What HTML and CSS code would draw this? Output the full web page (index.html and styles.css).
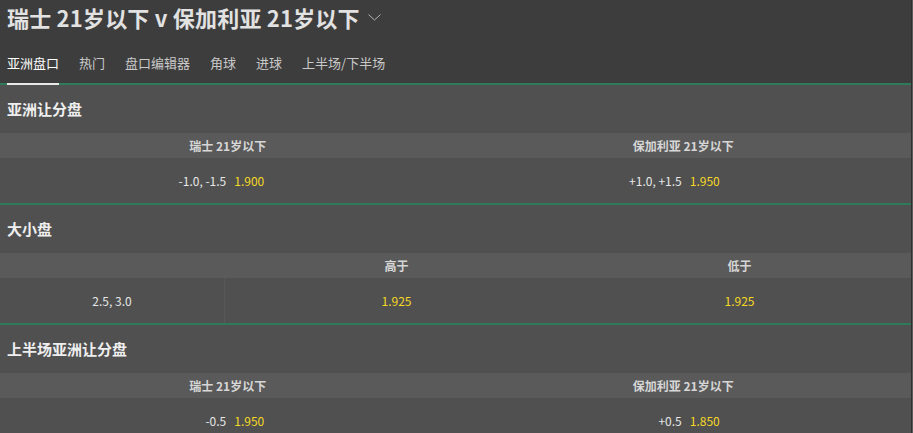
FILE: index.html
```html
<!DOCTYPE html>
<html lang="zh-CN">
<head>
<meta charset="utf-8">
<title>瑞士 21岁以下 v 保加利亚 21岁以下</title>
<link rel="stylesheet" href="styles.css">
</head>
<body>
<div class="page">
  <header class="top">
    <h1 class="match-title"><span>瑞士 21岁以下 v 保加利亚 21岁以下</span>
      <svg class="chevron" width="13" height="7" viewBox="0 0 13 7"><path d="M0.5 0.5 L6.5 6 L12.5 0.5" fill="none" stroke="#b5b5b5" stroke-width="1"/></svg>
    </h1>
    <nav class="tabs">
      <span class="tab active">亚洲盘口</span>
      <span class="tab">热门</span>
      <span class="tab">盘口编辑器</span>
      <span class="tab">角球</span>
      <span class="tab">进球</span>
      <span class="tab">上半场/下半场</span>
    </nav>
  </header>

  <section class="market">
    <h2 class="market-title">亚洲让分盘</h2>
    <div class="grid two head">
      <div class="hcell">瑞士 21岁以下</div>
      <div class="hcell">保加利亚 21岁以下</div>
    </div>
    <div class="grid two row">
      <div class="pick"><span class="line">-1.0, -1.5</span><span class="odds">1.900</span></div>
      <div class="pick"><span class="line">+1.0, +1.5</span><span class="odds">1.950</span></div>
    </div>
  </section>

  <section class="market">
    <h2 class="market-title">大小盘</h2>
    <div class="grid three head">
      <div class="hcell"></div>
      <div class="hcell">高于</div>
      <div class="hcell">低于</div>
    </div>
    <div class="grid three row">
      <div class="cell label">2.5, 3.0</div>
      <div class="cell"><span class="odds">1.925</span></div>
      <div class="cell"><span class="odds">1.925</span></div>
    </div>
  </section>

  <section class="market">
    <h2 class="market-title">上半场亚洲让分盘</h2>
    <div class="grid two head">
      <div class="hcell">瑞士 21岁以下</div>
      <div class="hcell">保加利亚 21岁以下</div>
    </div>
    <div class="grid two row">
      <div class="pick"><span class="line">-0.5</span><span class="odds">1.950</span></div>
      <div class="pick"><span class="line">+0.5</span><span class="odds">1.850</span></div>
    </div>
  </section>
</div>
</body>
</html>
```

FILE: styles.css
```css
html {
  background: #5b5b5b;
}
body {
  margin: 0;
  font-family: "Noto Sans CJK SC", sans-serif;
  color: #e6e6e6;
  overflow: hidden;
}
.page {
  width: 911px;
  height: 433px;
  background: #505050;
  border-right: 1px solid #303030;
}
.top {
  background: #3d3d3d;
  padding: 0 7px;
  border-bottom: 2px solid #2e7b5c;
  height: 83px;
}
.match-title {
  margin: 0;
  height: 36px;
  line-height: 34px;
  font-size: 22px;
  font-weight: 700;
  color: #e2e2e2;
  display: flex;
  align-items: flex-start;
  gap: 8px;
  white-space: nowrap;
  letter-spacing: 0.2px;
}
.chevron {
  margin-top: 14px;
}
.tabs {
  display: flex;
  gap: 20px;
  height: 47px;
  font-size: 13px;
}
.tab {
  position: relative;
  display: flex;
  align-items: center;
  padding-top: 5px;
  color: #c9c9c9;
}
.tab.active {
  color: #ffffff;
}
.tab.active::after {
  content: "";
  position: absolute;
  left: 0;
  right: 0;
  bottom: -2px;
  height: 2px;
  background: #e8e8e8;
}
.market {
  background: #505050;
  border-bottom: 2px solid #2e7b5c;
}
.market-title {
  margin: 0;
  height: 47px;
  padding: 1px 7px 0;
  line-height: 46px;
  font-size: 15px;
  font-weight: 700;
  color: #eeeeee;
}
.grid {
  display: grid;
}
.grid.two {
  grid-template-columns: 1fr 1fr;
}
.grid.three {
  grid-template-columns: 225px 1fr 1fr;
}
.head {
  background: #5a5a5a;
  height: 25px;
  line-height: 25px;
  font-size: 12px;
  font-weight: 700;
  color: #d6d6d6;
  text-align: center;
}
.row {
  height: 45px;
  line-height: 45px;
  font-size: 12px;
}
.pick {
  display: grid;
  grid-template-columns: 1fr 1fr;
  column-gap: 8px;
  padding-left: 5px;
}
.pick .line {
  text-align: right;
}
.pick .odds {
  text-align: left;
}
.cell {
  text-align: center;
}
.cell.label {
  border-right: 1px dotted #5f5f5f;
}
.line {
  color: #e6e6e6;
}
.odds {
  color: #f6d824;
}
```
